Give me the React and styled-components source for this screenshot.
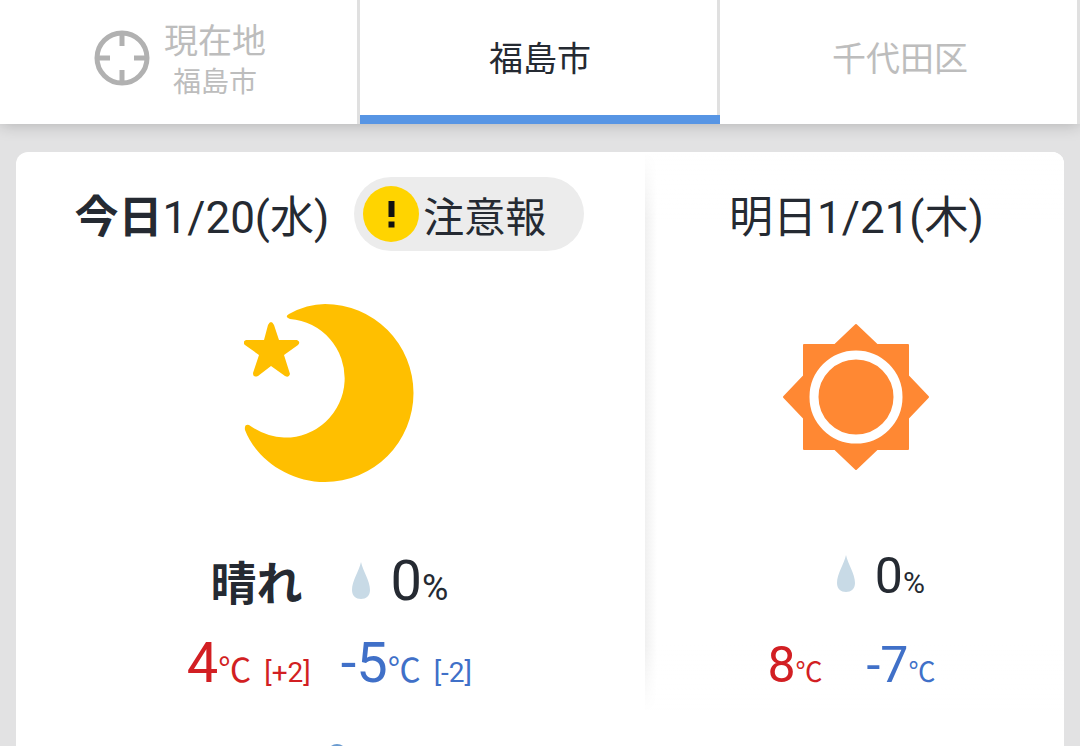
import styled, { createGlobalStyle } from "styled-components"

const GlobalStyle = createGlobalStyle`
    * {
        box-sizing: border-box;
    }
    body {
        margin: 0;
        background-color: #e2e2e3;
        color: #252a32;
        font-family: Roboto, "Noto Sans CJK JP", sans-serif;
    }
    h2, p {
        margin: 0;
    }
`;

const Page = styled.div`
    height: 100vh;
    overflow: hidden;
    display: flex;
    flex-direction: column;
`;

const Tabs = styled.nav`
    display: grid;
    grid-template-columns: repeat(3, 1fr);
    background-color: white;
    box-shadow: 0 0 16px rgba(0,0,0,0.24);
`;

const Tab = styled.button`
    height: 124px;
    display: flex;
    align-items: center;
    justify-content: center;
    gap: 14px;
    padding: 0px 0px 8px;
    border: none;
    background-color: white;
    background-image: linear-gradient(#e0e0e0, #e0e0e0);
    background-size: 3px 100%;
    background-position: right top;
    background-repeat: no-repeat;
    box-shadow: ${props => props.$active ? "inset 0 -9px #5795e4" : "none"};
    color: ${props => props.$active ? "#252a32" : "#bdbdbd"};
    font-family: inherit;
    font-size: 34px;
    line-height: 42px;
    cursor: pointer;
`;

const TabLabel = styled.span`
    display: flex;
    flex-direction: column;
    align-items: center;
    padding-top: ${props => props.$single ? "2px" : "8px"};
`;

const TabSub = styled.span`
    font-size: 28px;
`;

const Card = styled.main`
    flex: 1;
    margin: 28px 16px 0px;
    overflow: hidden;
    background-color: white;
    border-radius: 12px 12px 0px 0px;
`;

const Days = styled.div`
    display: grid;
    grid-template-columns: 3fr 2fr;
`;

const Day = styled.section`
    display: flex;
    flex-direction: column;
    align-items: center;
    padding: 25px 2px 0px 0px;
    height: 560px;
`;

const NextDay = styled(Day)`
    padding: 25px 0px 0px 4px;
    background-image: linear-gradient(to bottom, white, transparent 12%, transparent 88%, white),
        linear-gradient(to right, #f0f0f0, white 12px);
`;

const DayHead = styled.div`
    height: 74px;
    display: flex;
    align-items: center;
    gap: 25px;
`;

const DayTitle = styled.h2`
    padding-top: 8px;
    font-size: 44px;
    font-weight: 400;
    line-height: 64px;
    white-space: nowrap;
`;

const Alert = styled.a`
    height: 74px;
    display: flex;
    align-items: center;
    gap: 4px;
    padding: 0px 38px 0px 9px;
    border-radius: 37px;
    background-color: #ececec;
    color: inherit;
    font-size: 41px;
    text-decoration: none;
    white-space: nowrap;
`;

const Picture = styled.div`
    height: 284px;
    display: flex;
    align-items: center;
    padding-top: ${props => props.$small ? "8px" : "0px"};
`;

const Rain = styled.div`
    height: 84px;
    display: flex;
    align-items: baseline;
    padding-top: ${props => props.$small ? "3px" : "8px"};
    padding-left: ${props => props.$small ? "48px" : "0px"};
    line-height: 76px;
`;

const Weather = styled.strong`
    margin-right: 49px;
    font-size: 46px;
`;

const Drop = styled.svg`
    margin-right: 19px;
`;

const Value = styled.span`
    font-size: ${props => props.$small ? "50px" : "56px"};
`;

const Unit = styled.span`
    font-size: ${props => props.$small ? "27px" : "33px"};
`;

const Percent = styled.span`
    font-size: ${props => props.$small ? "30px" : "36px"};
`;

const Temps = styled.div`
    height: 80px;
    display: flex;
    align-items: baseline;
    gap: ${props => props.$small ? "44px" : "30px"};
    padding-right: ${props => props.$small ? "10px" : "0px"};
    line-height: ${props => props.$small ? "92px" : "88px"};
`;

const Temp = styled.p`
    color: ${props => props.$high ? "#d21f23" : "#4070c8"};
    white-space: nowrap;
`;

const Diff = styled.span`
    margin-left: 13px;
    font-size: 28px;
`;

const Hourly = styled.div`
    display: grid;
    grid-template-columns: 3fr 2fr;
    justify-items: center;
    padding: 32px 0px 0px 10px;
`;

const TargetIcon = () => (
    <svg width="56" height="56" viewBox="0 0 56 56" fill="none" stroke="#b1b1b1" aria-hidden="true">
        <circle cx="28" cy="28" r="25" strokeWidth="5"/>
        <path d="M28 3v13M28 40v13M3 28h13M40 28h13" strokeWidth="5"/>
    </svg>
)

const AlertIcon = () => (
    <svg width="56" height="56" viewBox="0 0 56 56" aria-hidden="true">
        <circle cx="28" cy="28" r="28" fill="#ffd400"/>
        <path d="M25.5 15h6v16h-6zM25.5 35.5h6v6h-6z" fill="#111"/>
    </svg>
)

const MoonIcon = () => (
    <svg width="170" height="178" viewBox="0 0 170 178" fill="#ffbf00" role="img" aria-label="晴れ">
        <path d="M45 10Q63 0 81 0A88.5 89 0 0 1 81 178C45 178 12 155 1 126Q0 120 5 121Q22 133 40 133.5A59.35 59.35 0 0 0 46 15Q40 13 45 10Z"/>
        <path d="M24 21Q27 15 30 21L35 36L53 36Q57 38 54 41L40 51L46 70Q45 74 41 72L27 62L14 72Q9 74 9 69L15 51L1 41Q-2 38 2 36L20 36Z"/>
    </svg>
)

const SunIcon = () => (
    <svg width="148" height="148" viewBox="0 0 148 148" role="img" aria-label="晴れ">
        <path d="M74 2L95 22H126V53L146 74L126 95V126H95L74 146L53 126H22V95L2 74L22 53V22H53Z" fill="#ff8833" stroke="#ff8833" strokeWidth="2" strokeLinejoin="round"/>
        <circle cx="74" cy="74" r="42" fill="none" stroke="white" strokeWidth="9"/>
    </svg>
)

const DropIcon = () => (
    <Drop width="20" height="38" viewBox="0 0 20 38" aria-hidden="true">
        <path d="M10 0C8 9 1 19 1 28C1 34 5 37 10 37S19 34 19 28C19 19 12 9 10 0Z" fill="#c8dae6"/>
    </Drop>
)

const App = () => {
  return (
    <Page>
        <GlobalStyle/>
        <Tabs>
            <Tab>
                <TargetIcon/>
                <TabLabel>
                    <span>現在地</span>
                    <TabSub>福島市</TabSub>
                </TabLabel>
            </Tab>
            <Tab $active><TabLabel $single>福島市</TabLabel></Tab>
            <Tab><TabLabel $single>千代田区</TabLabel></Tab>
        </Tabs>
        <Card>
            <Days>
                <Day>
                    <DayHead>
                        <DayTitle><strong>今日</strong>1/20(水)</DayTitle>
                        <Alert href="#alert"><AlertIcon/>注意報</Alert>
                    </DayHead>
                    <Picture><MoonIcon/></Picture>
                    <Rain>
                        <Weather>晴れ</Weather>
                        <DropIcon/>
                        <Value>0</Value>
                        <Percent>%</Percent>
                    </Rain>
                    <Temps>
                        <Temp $high><Value>4</Value><Unit>℃</Unit><Diff>[+2]</Diff></Temp>
                        <Temp><Value>-5</Value><Unit>℃</Unit><Diff>[-2]</Diff></Temp>
                    </Temps>
                </Day>
                <NextDay>
                    <DayHead>
                        <DayTitle>明日1/21(木)</DayTitle>
                    </DayHead>
                    <Picture $small><SunIcon/></Picture>
                    <Rain $small>
                        <DropIcon/>
                        <Value $small>0</Value>
                        <Percent $small>%</Percent>
                    </Rain>
                    <Temps $small>
                        <Temp $high><Value $small>8</Value><Unit $small>℃</Unit></Temp>
                        <Temp><Value $small>-7</Value><Unit $small>℃</Unit></Temp>
                    </Temps>
                </NextDay>
            </Days>
            <Hourly>
                <svg width="20" height="20" viewBox="0 0 20 20" aria-hidden="true">
                    <circle cx="10" cy="10" r="10" fill="#6a9bd0"/>
                </svg>
            </Hourly>
        </Card>
    </Page>
  )
}

export default App
